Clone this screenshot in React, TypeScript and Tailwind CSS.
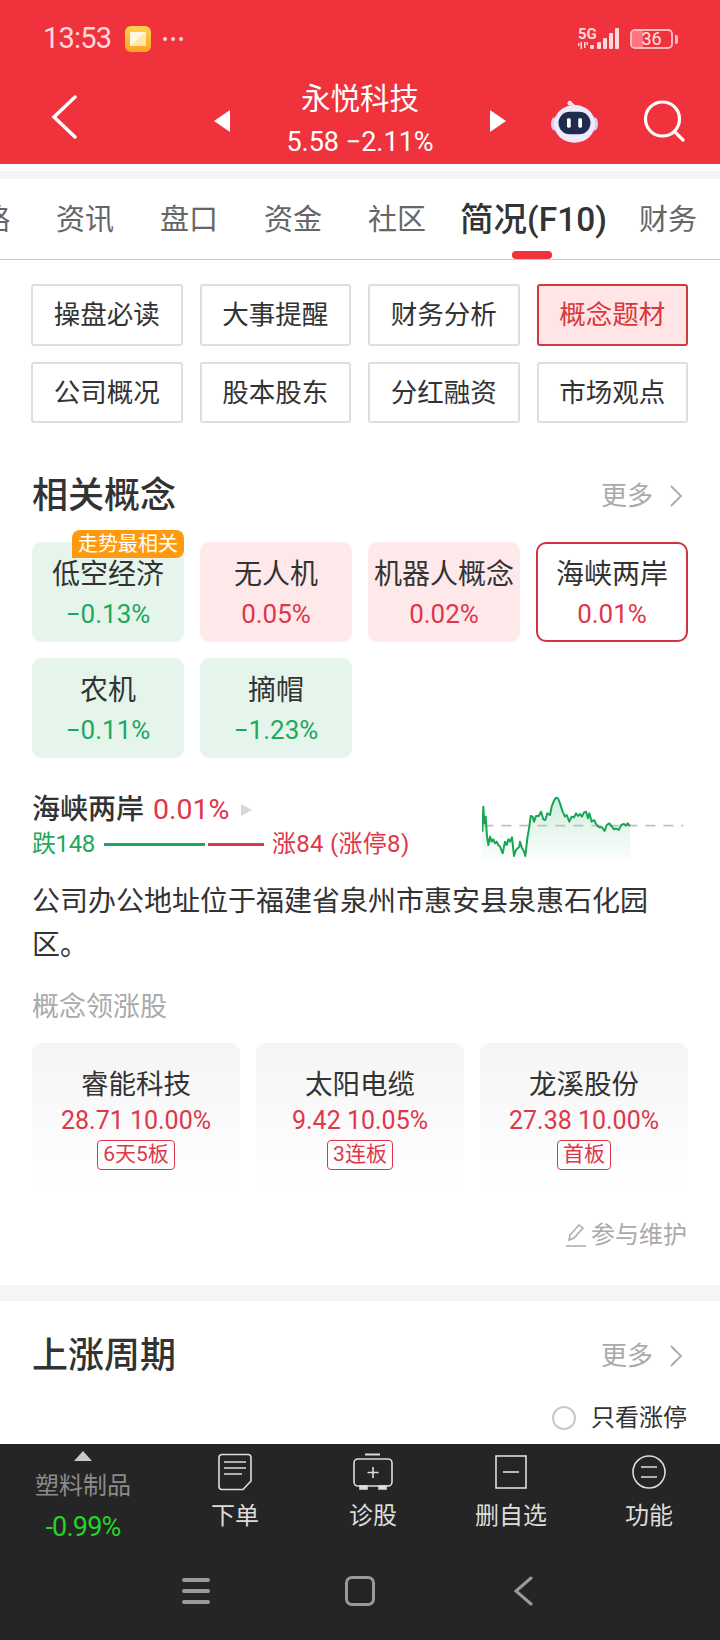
const FONT = "font-['Roboto','Noto_Sans_CJK_SC',sans-serif]";

const tabs = ["资讯", "盘口", "资金", "社区"];
const menu = [
  ["操盘必读", "大事提醒", "财务分析", "概念题材"],
  ["公司概况", "股本股东", "分红融资", "市场观点"],
];
const concepts = [
  { name: "低空经济", pct: "−0.13%", up: false, tip: true },
  { name: "无人机", pct: "0.05%", up: true },
  { name: "机器人概念", pct: "0.02%", up: true },
  { name: "海峡两岸", pct: "0.01%", up: true, active: true },
  { name: "农机", pct: "−0.11%", up: false },
  { name: "摘帽", pct: "−1.23%", up: false },
];
const leaders = [
  { name: "睿能科技", quote: "28.71 10.00%", tag: "6天5板" },
  { name: "太阳电缆", quote: "9.42 10.05%", tag: "3连板" },
  { name: "龙溪股份", quote: "27.38 10.00%", tag: "首板" },
];

// 走势线，坐标按参考图放大 3 倍后读取
const trend =
  "127,155 130,80 133,130 137,110 141,170 145,195 150,170 155,185 160,178 165,190 170,185 175,195 180,200 188,220 195,185 200,195 205,178 210,185 216,172 222,228 228,210 238,200 240,185 246,205 250,210 256,228 262,175 268,140 272,108 278,110 282,125 288,108 296,108 303,95 310,118 316,120 322,100 330,105 335,80 342,62 348,53 354,55 360,70 368,95 375,110 380,105 388,125 395,110 402,112 408,100 414,108 420,102 426,110 432,97 438,95 444,115 448,100 455,125 462,120 470,135 478,142 486,142 494,153 500,135 508,130 516,140 522,148 528,145 536,150 544,135 552,132 558,137 563,130 570,138";

const More = () => (
  <div className="flex items-center text-[26px] text-[#aaaaaa]">
    更多
    <svg width="14" height="24" viewBox="0 0 14 24" className="ml-[16px] mr-[-1px]" fill="none" stroke="#aaaaaa" strokeWidth="1.8">
      <path d="M2 2l10 10L2 22" />
    </svg>
  </div>
);

const StatusBar = () => (
  <div className="flex h-[78px] items-center pl-[43px] pr-[42px]">
    <span className="text-[29px] tracking-[-0.8px] text-[#ffd9dc]">13:53</span>
    <div className="relative ml-[14px] h-[26px] w-[26px] overflow-hidden rounded-[6px] bg-gradient-to-b from-[#ffd04f] to-[#f9a51f]">
      <svg width="26" height="26" viewBox="0 0 26 26" className="absolute inset-0">
        <path d="M5 6h16v14H5z" fill="#ffe7a8" />
        <path d="M5 20L21 6H5z" fill="#fff8e4" />
      </svg>
    </div>
    <div className="ml-[12px] flex gap-[4px]">
      <span className="h-[4px] w-[4px] rounded-full bg-[#ffd9dc]" />
      <span className="h-[4px] w-[4px] rounded-full bg-[#ffd9dc]" />
      <span className="h-[4px] w-[4px] rounded-full bg-[#ffd9dc]" />
    </div>
    <svg width="46" height="30" viewBox="0 -6 46 30" className="ml-auto mt-[-6px]" fill="#ffd9dc">
      <text x="1" y="12" fontSize="15" fontWeight="700" fontFamily="Roboto, sans-serif">5G</text>
      <path d="M1 19h1.500v-3H1zM3.500 22H5v-7H3.500zM7 21h1.500v-6H7zM9.500 18H11v-3H9.500z" />
      <rect x="13" y="18" width="4" height="4" rx="1" />
      <rect x="20" y="15" width="4" height="7" rx="1" />
      <rect x="26" y="11" width="4" height="11" rx="1" />
      <rect x="32" y="6" width="4" height="16" rx="1" />
      <rect x="38" y="1" width="4" height="21" rx="1" />
    </svg>
    <div className="relative ml-[7px] flex h-[20px] w-[43px] items-center justify-center overflow-hidden rounded-[5px] border-2 border-[#ffb9bf] text-[18px] leading-none text-[#ffe3e5]">
      <div className="absolute inset-y-0 left-0 w-[11px] bg-[#ff7680]" />
      <span className="relative">36</span>
    </div>
    <div className="ml-[2px] h-[9px] w-[3px] rounded-r-[2px] bg-[#ffb9bf]" />
  </div>
);

const Robot = () => (
  <svg width="47" height="44" viewBox="0 0 50 46">
    <path d="M25 8c0-3-1-4-4-5" fill="none" stroke="#ffdfe3" strokeWidth="2" />
    <circle cx="20" cy="3" r="2.500" fill="#ffdfe3" />
    <ellipse cx="3.500" cy="25" rx="3.500" ry="7" fill="#d6cff5" />
    <ellipse cx="46.500" cy="25" rx="3.500" ry="7" fill="#d6cff5" />
    <ellipse cx="25" cy="25" rx="22" ry="20" fill="#eeeafc" />
    <rect x="8" y="12" width="34" height="24" rx="12" fill="#1f2c4d" />
    <rect x="17" y="19" width="4" height="10" rx="1.500" fill="#ffffff" />
    <rect x="29" y="19" width="4" height="10" rx="1.500" fill="#ffffff" />
  </svg>
);

const Header = () => (
  <div className="h-[164px] bg-[#f0323c] text-white">
    <StatusBar />
    <div className="flex h-[86px] items-center pl-[51px]">
      <svg width="26" height="44" viewBox="0 0 26 44" fill="none" stroke="#ffffff" strokeWidth="3.500" strokeLinecap="round" className="mt-[-8px]">
        <path d="M24 2L3 22l21 20" />
      </svg>
      <svg width="16" height="22" viewBox="0 0 16 22" fill="#ffffff" className="ml-[137px]">
        <path d="M16 0v22L0 11z" />
      </svg>
      <div className="flex w-[260px] flex-col items-center">
        <span className="h-[42px] text-[29.5px] leading-[36px]">永悦科技</span>
        <span className="text-[27px] leading-[38px]">5.58 −2.11%</span>
      </div>
      <svg width="16" height="22" viewBox="0 0 16 22" fill="#ffffff">
        <path d="M0 0v22l16-11z" />
      </svg>
      <div className="ml-[45px] mt-[2px]">
        <Robot />
      </div>
      <svg width="42" height="42" viewBox="0 0 42 42" fill="none" stroke="#ffffff" strokeWidth="3.200" strokeLinecap="round" className="ml-[45px]">
        <circle cx="19.500" cy="19" r="17" />
        <path d="M32 32l8 8" />
      </svg>
    </div>
  </div>
);

const Tabs = () => (
  <div className="flex h-[81px] items-center gap-[46px] overflow-hidden whitespace-nowrap border-b border-[#cccccc] pt-[3px] text-[29px] text-[#666666]">
    <span className="ml-[-19px]">略</span>
    {tabs.map((t) => (
      <span key={t}>{t}</span>
    ))}
    <span className="relative ml-[-12px] mr-[-14px] text-[33.5px] font-medium text-[#333333]">
      简况(F10)
      <span className="absolute bottom-[-13px] left-[52px] h-[8px] w-[40px] rounded-full bg-[#f0323c]" />
    </span>
    <span>财务</span>
  </div>
);

const Menu = () => (
  <div className="grid grid-cols-4 gap-x-[17px] gap-y-[16px] pl-[31px] pr-[32px] pt-[24px]">
    {menu.flat().map((m, i) => {
      const on = m === "概念题材";
      return (
        <div
          key={m}
          className={`flex items-center justify-center rounded-[3px] border-2 text-[26.5px] ${
            i < 4 ? "h-[62px]" : "h-[61px]"
          } ${on ? "border-[#cf3a3c] bg-[#ffe5e6] text-[#d8383e]" : "border-[#dedede] text-[#333333]"}`}
        >
          {m}
        </div>
      );
    })}
  </div>
);

const Concepts = () => (
  <div className="mt-[21px] grid grid-cols-4 gap-[16px] px-[32px]">
    {concepts.map((c) => (
      <div
        key={c.name}
        className={`relative flex h-[100px] flex-col items-center rounded-[10px] ${
          c.active ? "border-2 border-[#d5303f] bg-white" : c.up ? "bg-[#ffe8ea]" : "bg-[#e5f5ec]"
        } ${c.active ? "pt-[12px]" : "pt-[14px]"}`}
      >
        {c.tip && (
          <div className="absolute right-0 top-[-12px] flex h-[28px] w-[112px] items-center justify-center rounded-[8px] rounded-bl-none bg-[#ff9a0e] text-[20px] text-white">
            走势最相关
          </div>
        )}
        <span className="h-[38px] whitespace-nowrap text-[28px] leading-[38px] text-[#333333]">{c.name}</span>
        <span className={`text-[26px] leading-[40px] ${c.up ? "text-[#e0364a]" : "text-[#1fa85d]"}`}>{c.pct}</span>
      </div>
    ))}
  </div>
);

const ConceptDetail = () => (
  <div className="mt-[31px] flex justify-between pl-[32px] pr-[34px]">
    <div>
      <div className="flex h-[40px] items-center pt-[2px]">
        <span className="text-[28px] font-medium text-[#333333]">海峡两岸</span>
        <span className="ml-[9px] text-[28.5px] text-[#e0364a]">0.01%</span>
        <svg width="11" height="12" viewBox="0 0 11 12" fill="#d8d8d8" className="ml-[12px]">
          <path d="M0 0l11 6-11 6z" />
        </svg>
      </div>
      <div className="flex h-[30px] items-center text-[24px]">
        <span className="tracking-[-0.4px] text-[#1fa85d]">跌148</span>
        <div className="ml-[9px] h-[3px] w-[101px] bg-[#1fa85d]" />
        <div className="ml-[3px] h-[3px] w-[56px] bg-[#e0364a]" />
        <span className="ml-[8px] tracking-[0.3px] text-[#e0364a]">涨84 (涨停8)</span>
      </div>
    </div>
    <svg width="204" height="75" viewBox="126 30 612 225" fill="none" className="mt-[1px]">
      <defs>
        <linearGradient id="area" x1="0" y1="0" x2="0" y2="1">
          <stop offset="0" stopColor="#1fa85d" stopOpacity="0.2" />
          <stop offset="1" stopColor="#1fa85d" stopOpacity="0.02" />
        </linearGradient>
      </defs>
      <polygon points={`${trend} 570,235 127,235`} fill="url(#area)" />
      <path d="M130 137H730" stroke="#c0c0c0" strokeWidth="5" strokeDasharray="30 24" />
      <polyline points={trend} stroke="#16a655" strokeWidth="6" strokeLinejoin="round" />
    </svg>
  </div>
);

const Leaders = () => (
  <div className="mt-[16px] grid grid-cols-3 gap-[16px] px-[32px]">
    {leaders.map((s) => (
      <div
        key={s.name}
        className="flex h-[144px] flex-col items-center rounded-[10px] bg-gradient-to-b from-[#f5f5f5] to-white pt-[22px]"
      >
        <span className="h-[40px] text-[27.5px] leading-[40px] text-[#333333]">{s.name}</span>
        <span className="mt-[-3px] text-[25px] leading-[38px] text-[#e0364a]">{s.quote}</span>
        <span className="flex h-[30px] items-center rounded-[4px] border border-[#e0364a] px-[5px] text-[21px] text-[#e0364a]">
          {s.tag}
        </span>
      </div>
    ))}
  </div>
);

const footerItems = [
  {
    label: "下单",
    icon: (
      <svg width="34" height="38" viewBox="0 0 34 38" fill="none" stroke="#dddddd" strokeWidth="1.600">
        <path d="M4 1.500h26a3 3 0 013 3V28l-8 8.500H4a3 3 0 01-3-3v-29a3 3 0 013-3z" />
        <path d="M6 9h22M6 15h22M6 21h18" />
      </svg>
    ),
  },
  {
    label: "诊股",
    icon: (
      <svg width="40" height="38" viewBox="0 0 40 38" fill="none" stroke="#dddddd" strokeWidth="1.600">
        <path d="M12 1.500h15" strokeWidth="2" />
        <rect x="1" y="6" width="38" height="27" rx="4" />
        <path d="M20 14v11M14.500 19.500h11" />
        <path d="M7 33h7v3H7zM26 33h7v3h-7z" fill="#dddddd" />
      </svg>
    ),
  },
  {
    label: "删自选",
    icon: (
      <svg width="32" height="34" viewBox="0 0 32 34" fill="none" stroke="#dddddd" strokeWidth="1.600">
        <rect x="1" y="1" width="30" height="32" />
        <path d="M8 17h16" />
      </svg>
    ),
  },
  {
    label: "功能",
    icon: (
      <svg width="34" height="34" viewBox="0 0 34 34" fill="none" stroke="#dddddd" strokeWidth="1.600">
        <circle cx="17" cy="17" r="16" />
        <path d="M9 12h16M9 22h16" />
      </svg>
    ),
  },
];

const Footer = () => (
  <div className="mt-auto h-[196px] bg-[#252525]">
    <div className="flex h-[110px]">
      <div className="flex w-[166px] flex-col items-center pt-[7px]">
        <svg width="18" height="10" viewBox="0 0 18 10" fill="#c9c9c9">
          <path d="M9 0l9 10H0z" />
        </svg>
        <span className="mt-[7px] text-[24px] leading-[36px] text-[#8b8b8b]">塑料制品</span>
        <span className="mt-[5px] text-[27px] leading-[36px] tracking-[-0.8px] text-[#27d327]">-0.99%</span>
      </div>
      {footerItems.map((f) => (
        <div key={f.label} className="flex w-[138px] flex-col items-center">
          <div className="flex h-[56px] items-center">{f.icon}</div>
          <span className="mt-[1px] text-[24px] leading-[30px] text-[#dddddd]">{f.label}</span>
        </div>
      ))}
    </div>
    <div className="flex items-center pl-[182px] pt-[22px]">
      <svg width="28" height="26" viewBox="0 0 28 26" fill="#9a9a9a">
        <rect y="0" width="28" height="4" rx="2" />
        <rect y="11" width="28" height="4" rx="2" />
        <rect y="22" width="28" height="4" rx="2" />
      </svg>
      <div className="ml-[135px] h-[30px] w-[30px] rounded-[7px] border-[3px] border-[#9a9a9a]" />
      <svg width="20" height="30" viewBox="0 0 20 30" fill="none" stroke="#9a9a9a" strokeWidth="3" strokeLinecap="round" className="ml-[138px]">
        <path d="M18 2L3 15l15 13" />
      </svg>
    </div>
  </div>
);

export default function App() {
  return (
    <div className={`flex h-[1640px] w-[720px] flex-col overflow-hidden bg-white ${FONT}`}>
      <Header />
      <div className="mt-[7px] h-[8px] shrink-0 bg-[#f5f5f5]" />
      <Tabs />
      <Menu />

      <div className="mt-[48px] flex h-[50px] items-center justify-between pl-[32px] pr-[38px]">
        <h2 className="text-[36px] font-medium text-[#333333]">相关概念</h2>
        <More />
      </div>
      <Concepts />
      <ConceptDetail />

      <p className="mt-[15px] pl-[32px] pr-[60px] text-[28px] leading-[44px] text-[#333333]">
        公司办公地址位于福建省泉州市惠安县泉惠石化园区。
      </p>
      <div className="mt-[19px] flex h-[40px] items-center pl-[32px] text-[27px] text-[#aaaaaa]">概念领涨股</div>
      <Leaders />

      <div className="mt-[28px] flex h-[40px] items-center justify-end pr-[33px] text-[24px] text-[#aaaaaa]">
        <svg width="24" height="24" viewBox="0 0 24 24" fill="none" stroke="#aaaaaa" strokeWidth="1.500" className="mr-[3px]">
          <path d="M5 17l1-5L15 2l4 3-9 10z" />
          <path d="M2 23h20" />
        </svg>
        参与维护
      </div>
      <div className="mt-[30px] h-[16px] shrink-0 bg-[#f5f5f5]" />

      <div className="mt-[30px] flex h-[50px] items-center justify-between pl-[32px] pr-[38px]">
        <h2 className="text-[36px] font-medium text-[#333333]">上涨周期</h2>
        <More />
      </div>
      <div className="mt-[17px] flex h-[40px] items-center justify-end pr-[33px] text-[24px] text-[#333333]">
        <span className="mr-[15px] h-[24px] w-[24px] rounded-full border-2 border-[#c8c8c8]" />
        只看涨停
      </div>

      <Footer />
    </div>
  );
}
